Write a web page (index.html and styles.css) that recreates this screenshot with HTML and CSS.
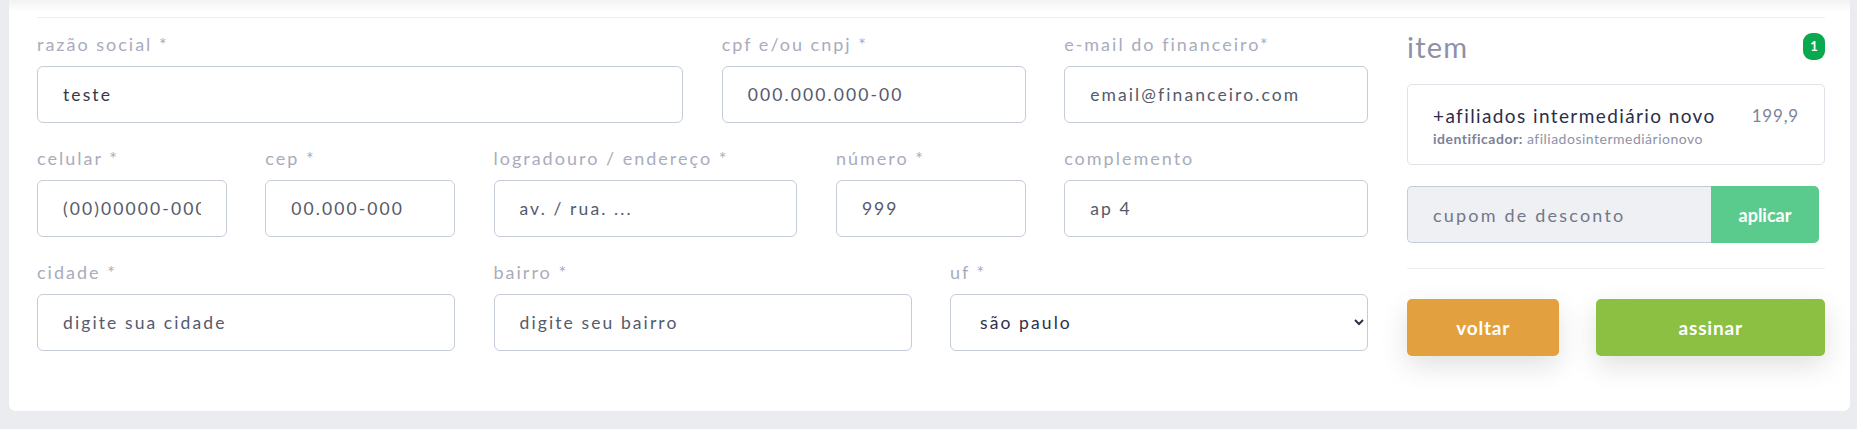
FILE: index.html
```html
<!doctype html>
<html>
<head>
<meta charset="utf-8">
<title>assinatura</title>
<link rel="stylesheet" href="styles.css">
</head>
<body>
    <div class="card">
        <div class="shade"></div>
        <div class="rule"></div>

        <div class="content">
            <form class="form">
                <div class="field span6">
                    <label>razão social *</label>
                    <input type="text" class="dark" value="teste">
                </div>
                <div class="field span3">
                    <label>cpf e/ou cnpj *</label>
                    <input type="text" value="000.000.000-00">
                </div>
                <div class="field span3">
                    <label>e-mail do financeiro*</label>
                    <input type="text" value="email@financeiro.com">
                </div>

                <div class="field span2">
                    <label>celular *</label>
                    <input type="text" value="(00)00000-0000">
                </div>
                <div class="field span2">
                    <label>cep *</label>
                    <input type="text" value="00.000-000">
                </div>
                <div class="field span3">
                    <label>logradouro / endereço *</label>
                    <input type="text" value="av. / rua. ...">
                </div>
                <div class="field span2">
                    <label>número *</label>
                    <input type="text" value="999">
                </div>
                <div class="field span3">
                    <label>complemento</label>
                    <input type="text" value="ap 4">
                </div>

                <div class="field span4">
                    <label>cidade *</label>
                    <input type="text" value="digite sua cidade">
                </div>
                <div class="field span4">
                    <label>bairro *</label>
                    <input type="text" value="digite seu bairro">
                </div>
                <div class="field span4">
                    <label>uf *</label>
                    <select>
                        <option>são paulo</option>
                        <option>rio de janeiro</option>
                        <option>minas gerais</option>
                    </select>
                </div>
            </form>

            <div class="side">
                <div class="side-head">
                    <span class="side-title">item</span>
                    <span class="badge">1</span>
                </div>

                <div class="item">
                    <div class="item-row">
                        <span class="item-name">+afiliados intermediário novo</span>
                        <span class="item-price">199,9</span>
                    </div>
                    <div class="item-id"><b>identificador:</b> afiliadosintermediárionovo</div>
                </div>

                <div class="coupon">
                    <input type="text" placeholder="cupom de desconto">
                    <button type="button">aplicar</button>
                </div>

                <div class="rule small"></div>

                <div class="actions">
                    <button type="button" class="btn back">voltar</button>
                    <button type="button" class="btn sign">assinar</button>
                </div>
            </div>
        </div>
    </div>
</body>
</html>
```

FILE: styles.css
```css
*{
    margin : 0;
    padding : 0;
    box-sizing : border-box;
}
body{
    background : #ebecef;
    font-family : "Lato", "Noto Sans", sans-serif;
}

.card{
    margin : 0 7px 0 9px;
    padding : 0 25px 55px 28px;
    background : white;
    border-radius : 0 0 6px 6px;
    box-shadow : 0 1px 1px rgba(0,0,0,.04);
}
.shade{
    height : 12px;
    margin : 0 -25px 0 -28px;
    background : linear-gradient(rgba(0,0,0,.05), rgba(0,0,0,0));
}
.rule{
    margin-top : 5px;
    border-top : 1px solid #eceef2;
}
.rule.small{
    margin : 25px 0 30px 0;
}

.content{
    display : grid;
    grid-template-columns : minmax(0, 1fr) 418px;
    column-gap : 39px;
    padding-top : 14px;
}

/* formulario */
.form{
    display : grid;
    grid-template-columns : repeat(12, minmax(0, 1fr));
    column-gap : 38.5px;
    row-gap : 23px;
    align-content : start;
}
.span2{ grid-column : span 2; }
.span3{ grid-column : span 3; }
.span4{ grid-column : span 4; }
.span6{ grid-column : span 6; }

.field label{
    display : block;
    height : 24px;
    line-height : 24px;
    margin-bottom : 10px;
    font-size : 18px;
    color : #a9acbd;
    letter-spacing : 2px;
    white-space : nowrap;
}
.field input,
.field select{
    display : block;
    width : 100%;
    height : 57px;
    padding : 0 25px;
    font-family : inherit;
    font-size : 17.5px;
    letter-spacing : 2.1px;
    color : #555a6c;
    background : white;
    border : 1px solid #c6ccd7;
    border-radius : 6px;
    outline : none;
}
.field input.dark{
    color : #33394a;
}
.field select{
    color : #2f3149;
    padding-right : 10px;
}

/* lateral */
.side-head{
    display : flex;
    justify-content : space-between;
    align-items : center;
    height : 28px;
    margin-bottom : 24px;
}
.side-title{
    font-size : 29px;
    color : #8d91a8;
    letter-spacing : 1.2px;
}
.badge{
    width : 22px;
    height : 27px;
    line-height : 27px;
    text-align : center;
    font-size : 13px;
    font-weight : bold;
    color : white;
    background : #0aa84f;
    border-radius : 9px;
}

.item{
    height : 81px;
    padding : 19px 25px 0 25px;
    border : 1px solid #dfe2e8;
    border-radius : 5px;
}
.item-row{
    display : flex;
    justify-content : space-between;
    line-height : 23px;
}
.item-name{
    font-size : 19px;
    color : #2b2d4a;
    letter-spacing : 1.4px;
}
.item-price{
    font-size : 17px;
    color : #7f8399;
    letter-spacing : .8px;
}
.item-id{
    margin-top : 4px;
    line-height : 16px;
    font-size : 14px;
    color : #8e92a6;
    letter-spacing : .5px;
}
.item-id b{
    color : #7d8196;
}

.coupon{
    display : flex;
    width : 412px;
    height : 57px;
    margin-top : 21px;
}
.coupon input{
    flex : 1;
    min-width : 0;
    padding : 0 25px;
    font-family : inherit;
    font-size : 18px;
    letter-spacing : 2.2px;
    background : #eff0f3;
    border : 1px solid #c6ccd7;
    border-right : none;
    border-radius : 5px 0 0 5px;
    outline : none;
}
.coupon input::placeholder{
    color : #74778a;
}
.coupon button{
    width : 108px;
    font-family : inherit;
    font-size : 18px;
    font-weight : bold;
    color : white;
    background : #5acb8c;
    border : none;
    border-radius : 0 5px 5px 0;
}

.actions{
    display : grid;
    grid-template-columns : 2fr 3fr;
    column-gap : 37px;
}
.btn{
    height : 57px;
    font-family : inherit;
    font-size : 19px;
    font-weight : bold;
    letter-spacing : .8px;
    color : white;
    border : none;
    border-radius : 5px;
    box-shadow : 0 10px 28px rgba(0,0,0,.12);
}
.back{
    background : #e3a03f;
}
.sign{
    background : #8cc043;
}
```
